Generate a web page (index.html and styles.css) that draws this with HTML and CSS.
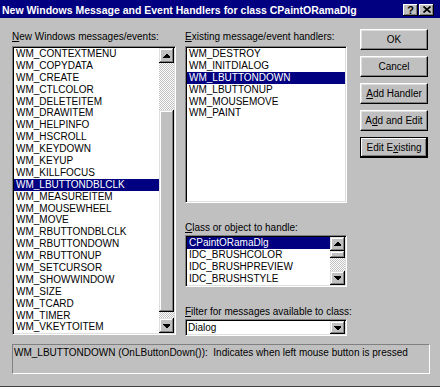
FILE: index.html
```html
<!DOCTYPE html>
<html lang="en">
<head>
  <meta charset="UTF-8">
  <title>New Windows Message and Event Handlers</title>
  <link rel="stylesheet" href="styles.css">
</head>
<body>

<div class="window">
  <div class="titlebar">
    <span class="title">New Windows Message and Event Handlers for class CPaintORamaDlg</span>
    <div class="title-buttons">
      <span class="tbtn">?</span>
      <span class="tbtn">
        <svg width="8" height="7" viewBox="0 0 8 7"><path d="M0.5 0.5 L7.5 6.5 M7.5 0.5 L0.5 6.5" stroke="#000" stroke-width="1.7"/></svg>
      </span>
    </div>
  </div>

  <div class="dialog">
    <div class="main">

      <!-- New messages -->
      <div class="col col-left">
        <div class="label"><u>N</u>ew Windows messages/events:</div>
        <div class="listbox list-messages">
          <ul class="items">
            <li>WM_CONTEXTMENU</li>
            <li>WM_COPYDATA</li>
            <li>WM_CREATE</li>
            <li>WM_CTLCOLOR</li>
            <li>WM_DELETEITEM</li>
            <li>WM_DRAWITEM</li>
            <li>WM_HELPINFO</li>
            <li>WM_HSCROLL</li>
            <li>WM_KEYDOWN</li>
            <li>WM_KEYUP</li>
            <li>WM_KILLFOCUS</li>
            <li class="selected">WM_LBUTTONDBLCLK</li>
            <li>WM_MEASUREITEM</li>
            <li>WM_MOUSEWHEEL</li>
            <li>WM_MOVE</li>
            <li>WM_RBUTTONDBLCLK</li>
            <li>WM_RBUTTONDOWN</li>
            <li>WM_RBUTTONUP</li>
            <li>WM_SETCURSOR</li>
            <li>WM_SHOWWINDOW</li>
            <li>WM_SIZE</li>
            <li>WM_TCARD</li>
            <li>WM_TIMER</li>
            <li>WM_VKEYTOITEM</li>
          </ul>
          <div class="scrollbar">
            <div class="sb-btn"><svg width="7" height="4" shape-rendering="crispEdges"><polygon points="3,0 4,0 7,3 7,4 0,4 0,3"/></svg></div>
            <div class="sb-track sb-track-top"></div>
            <div class="sb-thumb sb-thumb-long"></div>
            <div class="sb-track sb-track-fill"></div>
            <div class="sb-btn"><svg width="7" height="4" shape-rendering="crispEdges"><polygon points="0,0 7,0 7,1 4,4 3,4 0,1"/></svg></div>
          </div>
        </div>
      </div>

      <!-- Existing handlers, class, filter -->
      <div class="col col-mid">
        <div class="label"><u>E</u>xisting message/event handlers:</div>
        <div class="listbox list-existing">
          <ul class="items">
            <li>WM_DESTROY</li>
            <li>WM_INITDIALOG</li>
            <li class="selected">WM_LBUTTONDOWN</li>
            <li>WM_LBUTTONUP</li>
            <li>WM_MOUSEMOVE</li>
            <li>WM_PAINT</li>
          </ul>
        </div>

        <div class="label label-gap"><u>C</u>lass or object to handle:</div>
        <div class="listbox list-class">
          <ul class="items">
            <li class="selected">CPaintORamaDlg</li>
            <li>IDC_BRUSHCOLOR</li>
            <li>IDC_BRUSHPREVIEW</li>
            <li>IDC_BRUSHSTYLE</li>
          </ul>
          <div class="scrollbar">
            <div class="sb-btn sb-btn-small"><svg width="7" height="4" shape-rendering="crispEdges"><polygon points="3,0 4,0 7,3 7,4 0,4 0,3"/></svg></div>
            <div class="sb-thumb sb-thumb-short"></div>
            <div class="sb-track sb-track-fill"></div>
            <div class="sb-btn sb-btn-small"><svg width="7" height="4" shape-rendering="crispEdges"><polygon points="0,0 7,0 7,1 4,4 3,4 0,1"/></svg></div>
          </div>
        </div>

        <div class="label label-gap"><u>F</u>ilter for messages available to class:</div>
        <div class="combo">
          <span class="combo-value">Dialog</span>
          <span class="combo-btn"><svg width="7" height="4" shape-rendering="crispEdges"><polygon points="0,0 7,0 7,1 4,4 3,4 0,1"/></svg></span>
        </div>
      </div>

      <!-- Buttons -->
      <div class="col col-buttons">
        <button class="btn">OK</button>
        <button class="btn">Cancel</button>
        <button class="btn"><u>A</u>dd Handler</button>
        <button class="btn">A<u>d</u>d and Edit</button>
        <button class="btn btn-default">Edit E<u>x</u>isting</button>
      </div>

    </div>

    <div class="status">WM_LBUTTONDOWN (OnLButtonDown()):&nbsp; Indicates when left mouse button is pressed</div>
  </div>
</div>

</body>
</html>
```

FILE: styles.css
```css
body {
  margin: 0;
  background-color: #c0c0c0;
  font-family: "Liberation Sans", Arial, sans-serif;
  font-size: 10px;
  color: #000;
}

.window {
  width: 440px;
  height: 387px;
  box-sizing: border-box;
  border-bottom: 1px solid #404040;
  display: flex;
  flex-direction: column;
}

/* Title bar */
.titlebar {
  height: 18px;
  box-sizing: border-box;
  padding: 1px 6px 0 2px;
  background-color: #000080;
  color: #fff;
  font-size: 10.5px;
  font-weight: bold;
  display: flex;
  align-items: center;
  justify-content: space-between;
}

.title-buttons {
  display: flex;
  gap: 1px;
}

.tbtn {
  width: 15px;
  height: 12px;
  box-sizing: border-box;
  background-color: #c0c0c0;
  color: #000;
  font-size: 11px;
  font-weight: bold;
  line-height: 12px;
  display: flex;
  align-items: center;
  justify-content: center;
  box-shadow: inset -1px -1px #000, inset 1px 1px #fff, inset -2px -2px #808080;
}

/* Dialog body */
.dialog {
  padding: 11px 0 0 12px;
}

.main {
  display: flex;
}

.col-left {
  width: 164px;
  margin-right: 9px;
  padding-top: 1px;
}

.col-mid {
  width: 162px;
  margin-right: 13px;
  padding-top: 1px;
}

.col-buttons {
  width: 68px;
  display: flex;
  flex-direction: column;
  gap: 6px;
}

.label {
  line-height: 13px;
  margin-bottom: 3px;
  white-space: nowrap;
}

.label-gap {
  margin-top: 18px;
  margin-bottom: 1px;
}

/* Sunken list boxes */
.listbox, .combo {
  box-sizing: border-box;
  display: flex;
  padding: 1px;
  background-color: #fff;
  border: 1px solid;
  border-color: #808080 #fff #fff #808080;
  box-shadow: inset 1px 1px #000, inset -1px -1px #dfdfdf;
}

.list-messages {
  height: 289px;
}

.list-existing {
  height: 157px;
}

.list-class {
  height: 52px;
}

.items {
  flex: 1;
  list-style: none;
  margin: 0;
  padding: 0;
  overflow: hidden;
}

.items li {
  height: 11.9px;
  line-height: 11.9px;
  padding-left: 2px;
  white-space: nowrap;
}

.items li.selected {
  background-color: #000080;
  color: #fff;
}

/* Scroll bars */
.scrollbar {
  width: 15px;
  display: flex;
  flex-direction: column;
  background: repeating-conic-gradient(#c0c0c0 0% 25%, #fff 0% 50%) 0 0 / 2px 2px;
}

.sb-btn, .sb-thumb, .combo-btn {
  background-color: #c0c0c0;
  box-shadow: inset -1px -1px #000, inset 1px 1px #dfdfdf, inset -2px -2px #808080, inset 2px 2px #fff;
}

.sb-btn, .combo-btn {
  display: flex;
  align-items: center;
  justify-content: center;
  flex-shrink: 0;
}

.sb-btn {
  height: 15px;
}

.sb-btn-small {
  height: 14px;
}

.sb-track-top {
  height: 47px;
}

.sb-track-fill {
  flex: 1;
}

.sb-thumb-long {
  height: 202px;
}

.sb-thumb-short {
  height: 7px;
}

/* Combo box */
.combo {
  height: 17px;
}

.combo-value {
  flex: 1;
  line-height: 13px;
  padding-left: 1px;
}

.combo-btn {
  width: 15px;
}

/* Push buttons */
.btn {
  width: 68px;
  height: 21px;
  box-sizing: border-box;
  padding: 0;
  margin: 0;
  font-family: "Liberation Sans", Arial, sans-serif;
  font-size: 10px;
  color: #000;
  background-color: #c0c0c0;
  border: 1px solid;
  border-color: #fff #000 #000 #fff;
  box-shadow: inset -1px -1px #808080, inset 1px 1px #dfdfdf;
}

.btn-default {
  border-color: #000;
  box-shadow: inset -1px -1px #000, inset 1px 1px #fff, inset -2px -2px #808080;
}

/* Description line */
.status {
  width: 418px;
  height: 30px;
  margin-top: 8px;
  box-sizing: border-box;
  padding: 1px;
  line-height: 13px;
  white-space: nowrap;
  border: 1px solid;
  border-color: #808080 #fff #fff #808080;
}
```
